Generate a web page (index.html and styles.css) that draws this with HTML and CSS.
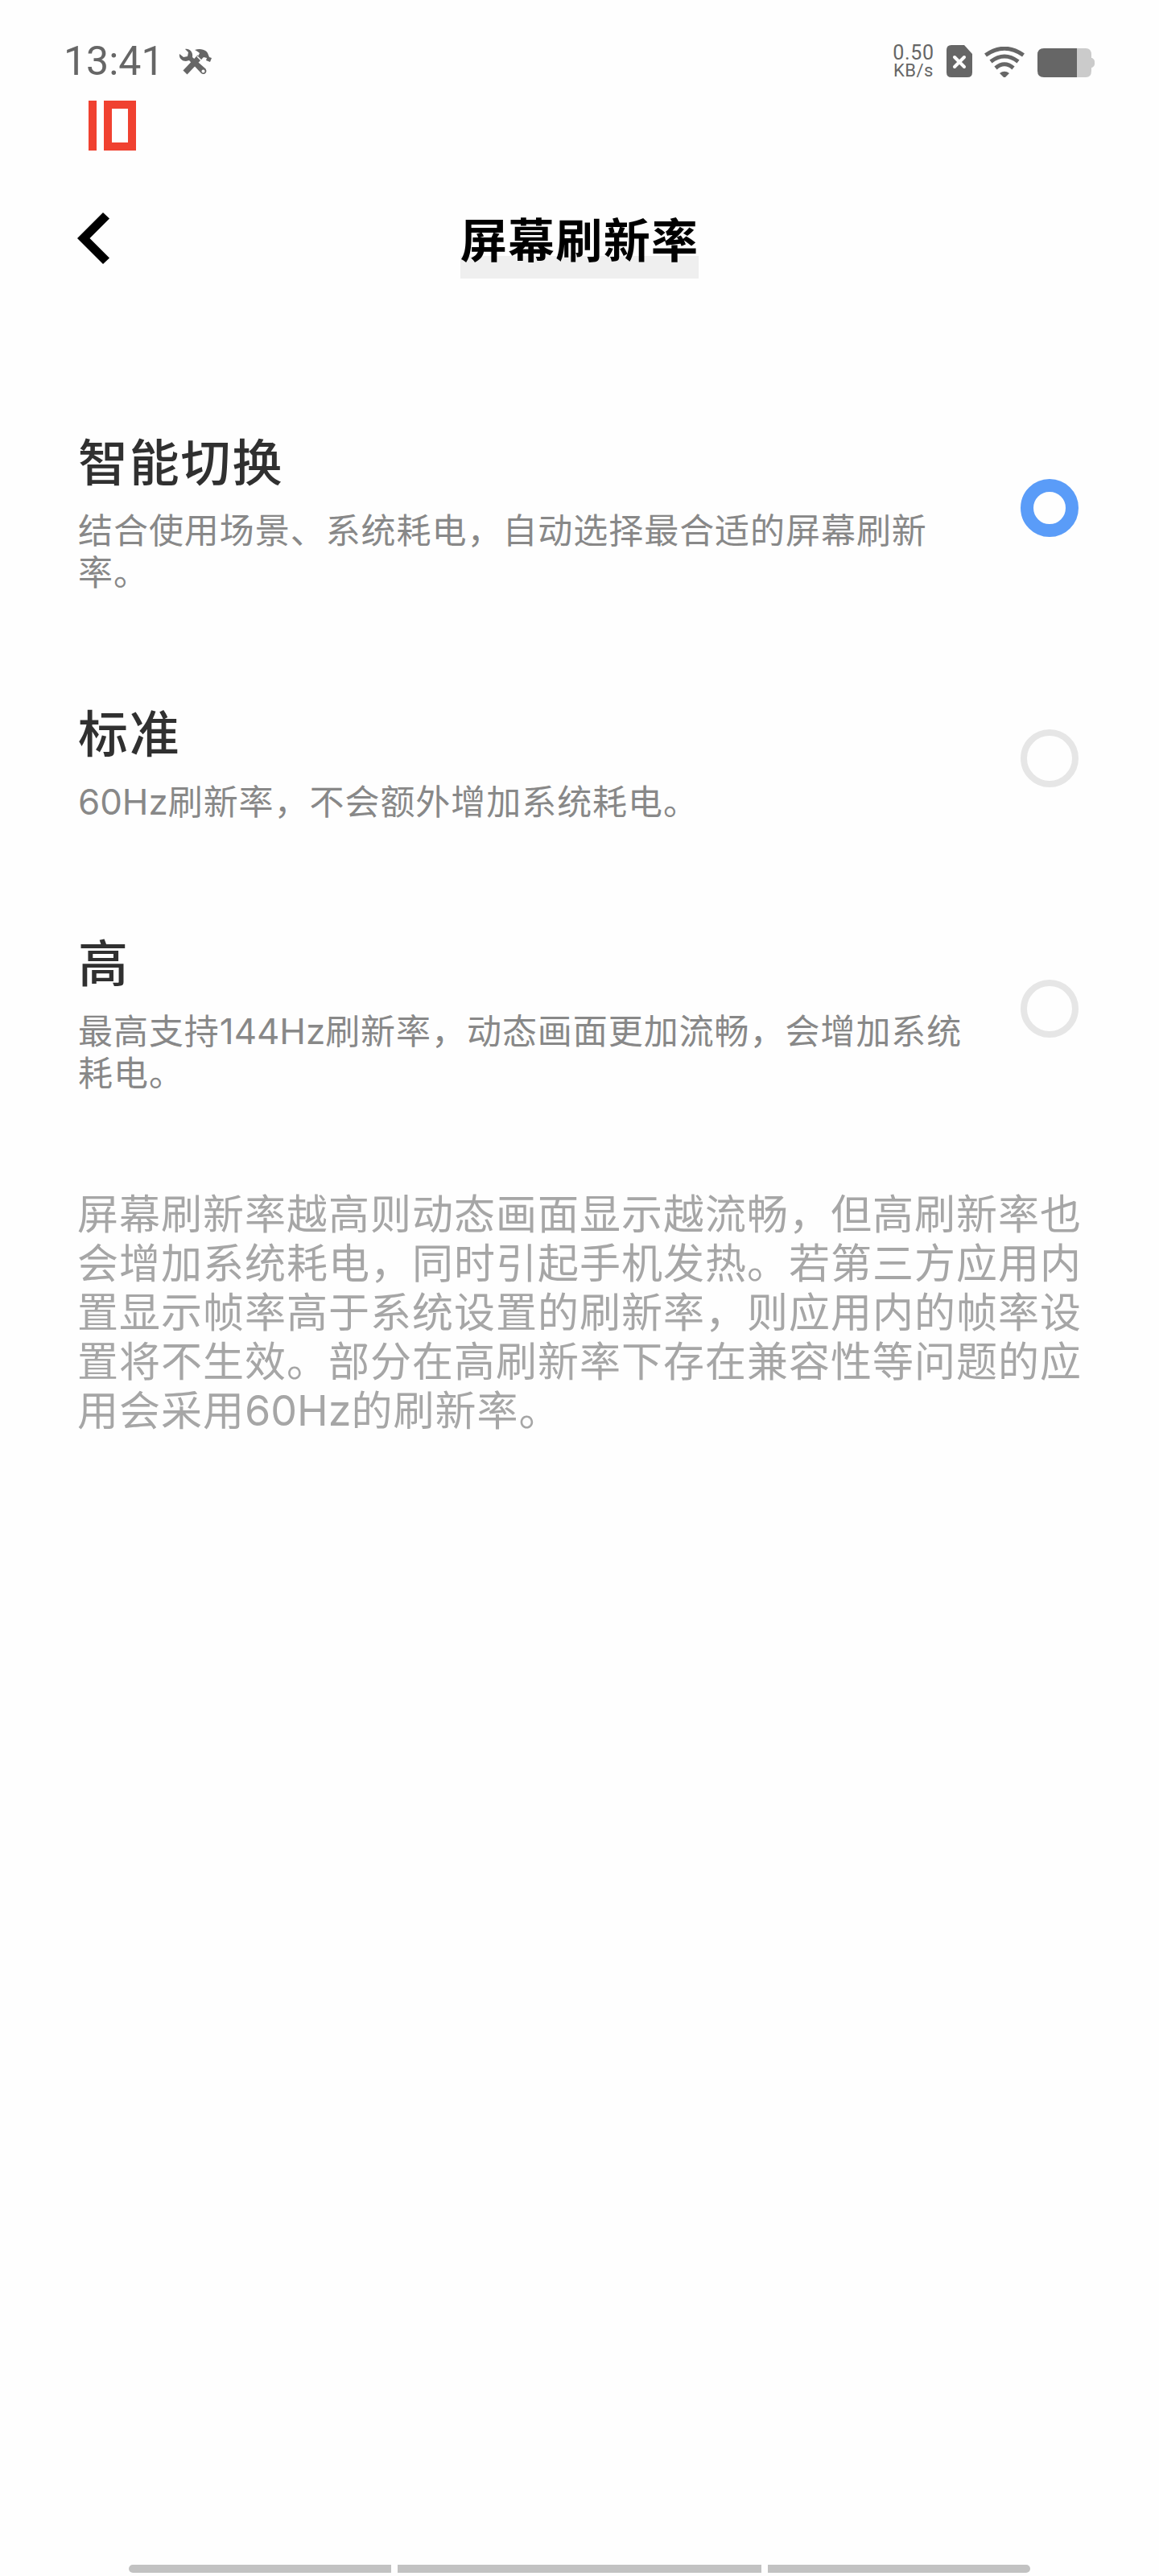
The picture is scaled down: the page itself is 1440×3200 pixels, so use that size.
FILE: index.html
```html
<!DOCTYPE html>
<html lang="zh-CN">
    <head>
        <meta charset="UTF-8" />
        <meta name="viewport" content="width=device-width, initial-scale=1.0" />
        <title>屏幕刷新率</title>
        <link rel="stylesheet" href="styles.css">
    </head>
    <body>
        <div class="screen">
            <div class="status-bar">
                <div class="status-left">
                    <span class="time">13:41</span>
                    <svg class="tools-icon" width="42" height="34" viewBox="0 0 42 34">
                        <!-- hammer -->
                        <path d="M20 2C26 0 33 1 36 6L38 11L41 12L39 17L34 15L35 12L31 11L28 14L24 10L26 6C24 4 22 3 20 2Z" fill="#666" />
                        <path d="M26 11L8 30" stroke="#666" stroke-width="7" />
                        <!-- wrench -->
                        <path d="M8 1L12 5L11 10L6 11L1 7C0 12 4 16 9 16L13 15L28 31C30 33 33 32 34 30C35 28 34 26 33 25L17 11C18 5 14 0 8 1Z" fill="#666" />
                        <circle cx="30.500" cy="28.500" r="2" fill="#fefefe" />
                        <path d="M23 10L29 16" stroke="#fefefe" stroke-width="1.500" />
                    </svg>
                </div>
                <div class="status-right">
                    <div class="speed">
                        <span class="speed-value">0.50</span>
                        <span class="speed-unit">KB/s</span>
                    </div>
                    <svg class="sim-icon" width="32" height="40" viewBox="0 0 32 40">
                        <path d="M6 0H22L32 11V34Q32 40 26 40H6Q0 40 0 34V6Q0 0 6 0Z" fill="#666" />
                        <path d="M10 15L22 27M22 15L10 27" stroke="#fefefe" stroke-width="4" stroke-linecap="round" />
                    </svg>
                    <svg class="wifi-icon" width="50" height="38" viewBox="0 0 50 38">
                        <path d="M1.500 10.500Q25 -6 48.500 10.500" />
                        <path d="M8 18.500Q25 5.500 42 18.500" />
                        <path d="M14 26.500Q25 17 36 26.500" />
                        <path class="wifi-dot" d="M19 33Q25 28.500 31 33L26 38H24Z" />
                    </svg>
                    <svg class="battery-icon" width="71" height="36" viewBox="0 0 71 36">
                        <path d="M49 0H60Q67 0 67 8V12H68Q71 14 71 16V20Q71 22 68 24H67V28Q67 36 60 36H49Z" fill="#cbcbcb" />
                        <path d="M8 0H49V36H8Q0 36 0 28V8Q0 0 8 0Z" fill="#666" />
                    </svg>
                </div>
            </div>

            <!-- frame rate counter -->
            <div class="fps" role="img" aria-label="10">
                <div class="fps-one"></div>
                <div class="fps-zero"></div>
            </div>

            <div class="header">
                <svg class="back" width="40" height="64" viewBox="0 0 40 64">
                    <path d="M32 0L40 7.500L15.500 32L40 56.500L32 64L0 32Z" fill="#000" />
                </svg>
                <h1 class="title">屏幕刷新率</h1>
            </div>

            <div class="options">
                <div class="option">
                    <div class="option-text">
                        <div class="option-name">智能切换</div>
                        <div class="option-desc">结合使用场景、系统耗电，自动选择最合适的屏幕刷新<br>率。</div>
                    </div>
                    <div class="radio checked"></div>
                </div>
                <div class="option">
                    <div class="option-text">
                        <div class="option-name">标准</div>
                        <div class="option-desc"><span class="latin">60Hz</span>刷新率，不会额外增加系统耗电。</div>
                    </div>
                    <div class="radio"></div>
                </div>
                <div class="option">
                    <div class="option-text">
                        <div class="option-name">高</div>
                        <div class="option-desc">最高支持<span class="latin">144Hz</span>刷新率，动态画面更加流畅，会增加系统<br>耗电。</div>
                    </div>
                    <div class="radio"></div>
                </div>
            </div>

            <p class="note">屏幕刷新率越高则动态画面显示越流畅，但高刷新率也<br>会增加系统耗电，同时引起手机发热。若第三方应用内<br>置显示帧率高于系统设置的刷新率，则应用内的帧率设<br>置将不生效。部分在高刷新率下存在兼容性等问题的应<br>用会采用<span class="latin">60Hz</span>的刷新率。</p>

            <div class="nav-bar">
                <div class="nav-side nav-left"></div>
                <div class="nav-middle"></div>
                <div class="nav-side nav-right"></div>
            </div>
        </div>
    </body>
</html>
```
FILE: styles.css
```css
* {
    box-sizing: border-box;
}
body {
    margin: 0;
    background-color: #fefefe;
    font-family: "Noto Sans CJK SC", sans-serif;
}
.screen {
    display: flex;
    flex-direction: column;
    width: 1440px;
    height: 3200px;
    overflow: hidden;
}
.status-bar {
    display: flex;
    justify-content: space-between;
    height: 125px;
    padding: 56px 80px 0 79px;
    color: #666;
}
.status-left,
.status-right {
    display: flex;
    align-items: flex-start;
}
.time {
    width: 143px;
    font-family: Roboto, sans-serif;
    font-size: 50px;
    line-height: 40px;
}
.tools-icon {
    margin-top: 4px;
}
.speed {
    display: flex;
    flex-direction: column;
    align-items: center;
    width: 52px;
    margin-right: 15px;
    font-family: Roboto, sans-serif;
}
.speed-value {
    font-size: 25px;
    line-height: 20px;
    letter-spacing: 0.7px;
}
.speed-unit {
    font-size: 22px;
    line-height: 23px;
    letter-spacing: 0.5px;
}
.sim-icon {
    margin-right: 15px;
}
.wifi-icon {
    margin: 2px 16px 0 0;
    fill: none;
    stroke: #666;
    stroke-width: 5;
}
.wifi-dot {
    fill: #666;
    stroke: none;
}
.battery-icon {
    margin-top: 4px;
}
.fps {
    display: flex;
    gap: 9px;
    height: 62px;
    margin-left: 110px;
}
.fps-one {
    width: 10px;
    background-color: #f04130;
}
.fps-zero {
    width: 40px;
    border: 10px solid #f04130;
}
.header {
    display: grid;
    grid-template-columns: 296px 1fr 296px;
    align-items: center;
    height: 100px;
    margin: 59px 96px 0;
}
.title {
    justify-self: center;
    height: 84px;
    margin: 16px 0 0;
    font-size: 58px;
    font-weight: 700;
    line-height: 66px;
    letter-spacing: 1.3px;
    white-space: nowrap;
    color: #000;
    background: linear-gradient(#efefef, #efefef) left bottom / 100% 28px no-repeat;
}
.options {
    padding: 181px 100px 0 97px;
}
.option {
    display: flex;
    align-items: center;
    justify-content: space-between;
    margin-bottom: 130px;
}
.option:last-child {
    margin-bottom: 119px;
}
.option-name {
    font-size: 62px;
    font-weight: 500;
    line-height: 88px;
    letter-spacing: 1.8px;
    color: #303030;
}
.option-desc {
    margin-top: 15px;
    font-size: 43px;
    line-height: 52px;
    letter-spacing: 0.95px;
    white-space: nowrap;
    color: #888;
}
.latin {
    font-family: Inter, sans-serif;
    font-size: 1.02em;
    line-height: 1;
    letter-spacing: 0;
}
.radio {
    flex: none;
    width: 72px;
    height: 72px;
    border: 8px solid #e6e6e6;
    border-radius: 50%;
}
.radio.checked {
    border: 16px solid #5a9cf8;
}
.note {
    margin: 0 0 0 96px;
    font-size: 51px;
    line-height: 61px;
    letter-spacing: 1px;
    white-space: nowrap;
    color: #a6a6a6;
}
.nav-bar {
    display: flex;
    gap: 8px;
    margin: auto 160px 4px;
}
.nav-side,
.nav-middle {
    height: 10px;
    background-color: #c2c2c2;
}
.nav-side {
    width: 326px;
}
.nav-middle {
    flex: 1;
}
.nav-left {
    border-radius: 5px 0 0 5px;
}
.nav-right {
    border-radius: 0 5px 5px 0;
}
```
